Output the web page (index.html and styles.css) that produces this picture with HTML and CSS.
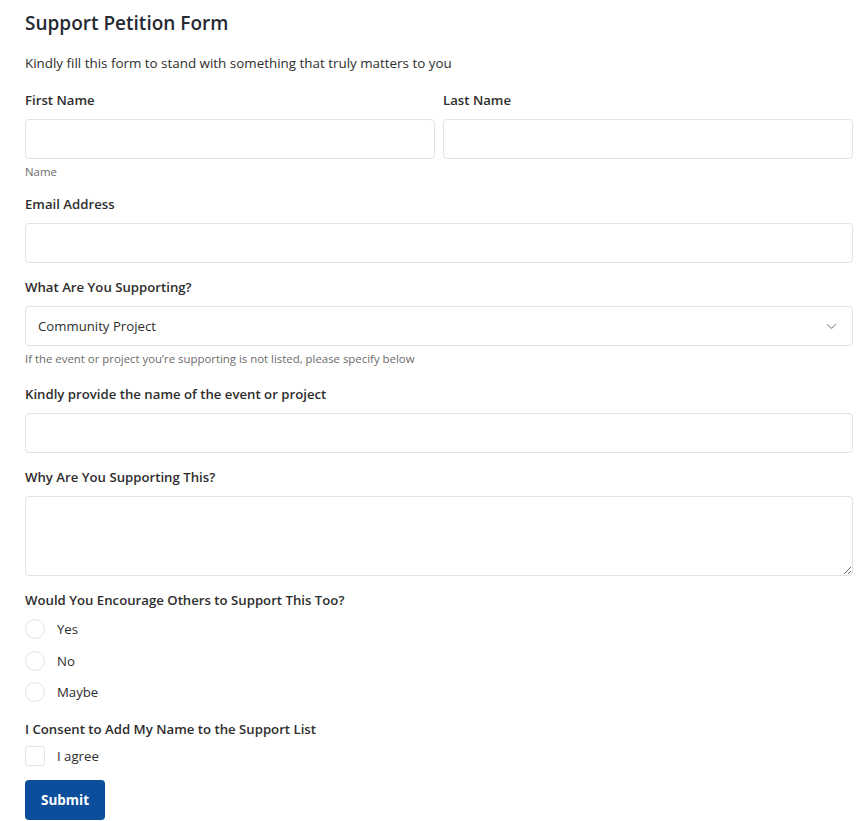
FILE: index.html
```html
<!DOCTYPE html>
<html>
  <head>
    <meta charset="utf-8"/>
    <meta name="viewport" content="width=device-width, initial-scale=1">
    <link rel="stylesheet" href="styles.css">
  </head>
<body>

<form class="petition">
  <h2 class="title">Support Petition Form</h2>
  <p class="intro">Kindly fill this form to stand with something that truly matters to you</p>

  <div class="row">
    <div class="field">
      <label class="label">First Name</label>
      <input class="input" type="text">
      <div class="hint hint-name">Name</div>
    </div>
    <div class="field">
      <label class="label">Last Name</label>
      <input class="input" type="text">
    </div>
  </div>

  <div class="field">
    <label class="label">Email Address</label>
    <input class="input" type="email">
  </div>

  <div class="field">
    <label class="label">What Are You Supporting?</label>
    <div class="select">
      <span>Community Project</span>
      <svg width="11" height="7" viewBox="0 0 11 7"><path d="M1 1.2 L5.5 5.4 L10 1.2" fill="none" stroke="#a0a0a0" stroke-width="1.1"/></svg>
    </div>
    <div class="hint">If the event or project you’re supporting is not listed, please specify below</div>
  </div>

  <div class="field">
    <label class="label">Kindly provide the name of the event or project</label>
    <input class="input" type="text">
  </div>

  <div class="field">
    <label class="label">Why Are You Supporting This?</label>
    <textarea class="textarea"></textarea>
  </div>

  <div class="field">
    <label class="label">Would You Encourage Others to Support This Too?</label>
    <div class="options">
      <div class="option"><span class="radio"></span>Yes</div>
      <div class="option"><span class="radio"></span>No</div>
      <div class="option"><span class="radio"></span>Maybe</div>
    </div>
  </div>

  <div class="field consent">
    <label class="label label-check">I Consent to Add My Name to the Support List</label>
    <div class="option"><span class="check"></span>I agree</div>
  </div>

  <button class="button" type="button">Submit</button>
</form>

</body>
</html>
```

FILE: styles.css
```css
* {
  box-sizing: border-box;
}

body {
  margin: 0;
  font-family: "Open Sans", Arial, sans-serif;
  color: #2e2e2e;
  background-color: #fff;
  overflow: hidden;
}

.petition {
  padding: 10px 9px 0 25px;
}

.title {
  margin: 0;
  font-size: 19px;
  line-height: 26px;
  font-weight: 600;
  color: #262a33;
}

.intro {
  margin: 18px 0 4px;
  font-size: 13.4px;
  line-height: 18px;
}

.row {
  display: flex;
  gap: 8px;
}

.row .field {
  flex: 1;
}

.field {
  margin-top: 15px;
}

.consent {
  margin-top: 18px;
}

.label {
  display: block;
  font-size: 13.2px;
  line-height: 18px;
  font-weight: 600;
  margin-bottom: 10px;
}

.label-check {
  margin-bottom: 8px;
}

.input,
.select,
.textarea {
  display: block;
  width: 100%;
  height: 40px;
  border: 1px solid #e2e2e2;
  border-radius: 4px;
  background: #fff;
  font-family: inherit;
}

.select {
  display: flex;
  align-items: center;
  justify-content: space-between;
  padding: 0 15px 0 12px;
  font-size: 13.2px;
}

.textarea {
  height: 80px;
  resize: vertical;
}

.hint {
  margin-top: 6px;
  padding-bottom: 4px;
  font-size: 11.4px;
  line-height: 14px;
  color: #6b6b6b;
}

.hint-name {
  padding-bottom: 1px;
}

.options {
  display: flex;
  flex-direction: column;
  gap: 11.5px;
}

.option {
  display: flex;
  align-items: center;
  height: 20px;
  font-size: 13.2px;
}

.radio,
.check {
  width: 20px;
  height: 20px;
  border: 1px solid #e2e2e2;
  margin-right: 12px;
}

.radio {
  border-radius: 50%;
}

.check {
  border-radius: 3px;
}

.button {
  display: block;
  margin-top: 14px;
  width: 80px;
  height: 40px;
  padding: 0;
  border: none;
  border-radius: 4px;
  background-color: #0b4f9c;
  color: #fff;
  font-family: inherit;
  font-size: 13.5px;
  font-weight: 700;
}
```
